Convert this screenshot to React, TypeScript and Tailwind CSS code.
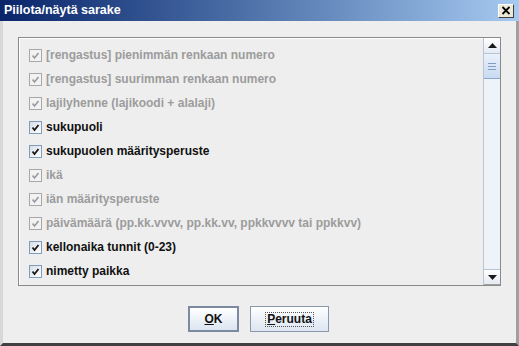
import React from "react";

const rows: { label: string; enabled: boolean }[] = [
  { label: "[rengastus] pienimmän renkaan numero", enabled: false },
  { label: "[rengastus] suurimman renkaan numero", enabled: false },
  { label: "lajilyhenne (lajikoodi + alalaji)", enabled: false },
  { label: "sukupuoli", enabled: true },
  { label: "sukupuolen määritysperuste", enabled: true },
  { label: "ikä", enabled: false },
  { label: "iän määritysperuste", enabled: false },
  { label: "päivämäärä (pp.kk.vvvv, pp.kk.vv, ppkkvvvv tai ppkkvv)", enabled: false },
  { label: "kellonaika tunnit (0-23)", enabled: true },
  { label: "nimetty paikka", enabled: true },
];

function Check({ enabled }: { enabled: boolean }) {
  return enabled ? (
    <div className="w-[13px] h-[13px] border border-[#7f9db9] bg-gradient-to-br from-[#d6dde8] to-[#ffffff] flex items-center justify-center shrink-0">
      <svg width="9" height="9" viewBox="0 0 9 9">
        <path d="M1.5 4.5 L3.5 7 L7.5 2" stroke="#1a1a1a" strokeWidth="1.8" fill="none" />
      </svg>
    </div>
  ) : (
    <div className="w-[13px] h-[13px] border border-[#a8a8a8] bg-[#f2f2f2] flex items-center justify-center shrink-0">
      <svg width="9" height="9" viewBox="0 0 9 9">
        <path d="M1.5 4.5 L3.5 7 L7.5 2" stroke="#9a9a9a" strokeWidth="1.6" fill="none" />
      </svg>
    </div>
  );
}

export default function App() {
  return (
    <div
      className="w-[519px] h-[346px] flex flex-col bg-[#eeeeee] overflow-hidden"
      style={{ fontFamily: "'Liberation Sans', Arial, sans-serif" }}
    >
      {/* Title bar */}
      <div className="h-[21px] shrink-0 flex items-center justify-between bg-gradient-to-r from-[#0a246a] to-[#a6caf0] pl-[4px] pr-[5px]">
        <span className="text-white font-bold text-[12.5px] leading-none">Piilota/näytä sarake</span>
        <div className="w-[16px] h-[14px] bg-[#ece9d8] border border-t-white border-l-white border-r-[#404040] border-b-[#404040] flex items-center justify-center">
          <svg width="10" height="9" viewBox="0 0 10 9">
            <path d="M1.5 1 L8.5 8 M8.5 1 L1.5 8" stroke="#000" strokeWidth="1.8" />
          </svg>
        </div>
      </div>

      {/* Body */}
      <div className="flex-1 flex flex-col border-l-[3px] border-l-[#d8d8d8] border-r-[3px] border-r-[#a0a0a0] border-b-[3px] border-b-[#404040]">
        <div className="mt-[16px] ml-[15px] mr-[15px] h-[249px] border border-[#8a8a8a] flex">
          <div className="flex-1 pt-[4px] border-l border-t border-white">
            {rows.map((r, i) => (
              <div key={i} className="h-[24px] flex items-center pl-[9px] gap-[4px]">
                <Check enabled={r.enabled} />
                <span
                  className={
                    "text-[12px] font-bold whitespace-nowrap " +
                    (r.enabled ? "text-[#111111]" : "text-[#9c9c9c]")
                  }
                >
                  {r.label}
                </span>
              </div>
            ))}
          </div>
          {/* Scrollbar */}
          <div className="w-[17px] flex flex-col border-l border-[#b8c4d4] bg-[#eef3fa]">
            <div className="h-[16px] flex items-center justify-center bg-gradient-to-b from-[#ffffff] to-[#e4eaf3] border-b border-[#b8c4d4]">
              <svg width="9" height="5" viewBox="0 0 9 5">
                <path d="M0 5 L4.5 0 L9 5 Z" fill="#1a1a1a" />
              </svg>
            </div>
            <div className="h-[25px] bg-gradient-to-b from-[#eaf1fb] to-[#c9daf2] border-b border-[#8ea8cc] flex flex-col items-center justify-center gap-[2px]">
              <div className="w-[8px] h-[1px] bg-[#7f9cc4]" />
              <div className="w-[8px] h-[1px] bg-[#7f9cc4]" />
              <div className="w-[8px] h-[1px] bg-[#7f9cc4]" />
            </div>
            <div className="flex-1" />
            <div className="h-[16px] flex items-center justify-center bg-gradient-to-b from-[#ffffff] to-[#e4eaf3] border-t border-[#b8c4d4] border-b border-b-[#a0a0a0]">
              <svg width="9" height="5" viewBox="0 0 9 5">
                <path d="M0 0 L4.5 5 L9 0 Z" fill="#1a1a1a" />
              </svg>
            </div>
          </div>
        </div>

        {/* Buttons */}
        <div className="mt-[20px] flex justify-center gap-[11px] pr-[2px]">
          <div className="w-[51px] h-[26px] border-2 border-[#7b8aa0] bg-gradient-to-b from-[#ffffff] to-[#dce5f1] flex items-center justify-center">
            <span className="text-[12px] font-bold text-[#111]">
              <span className="underline">O</span>K
            </span>
          </div>
          <div className="w-[79px] h-[26px] border border-[#8a98ad] bg-gradient-to-b from-[#ffffff] to-[#dce5f1] flex items-center justify-center">
            <span className="text-[12px] font-bold text-[#111] border border-dotted border-[#555] px-[1px] leading-[13px]">
              <span className="underline">P</span>eruuta
            </span>
          </div>
        </div>
      </div>
    </div>
  );
}
